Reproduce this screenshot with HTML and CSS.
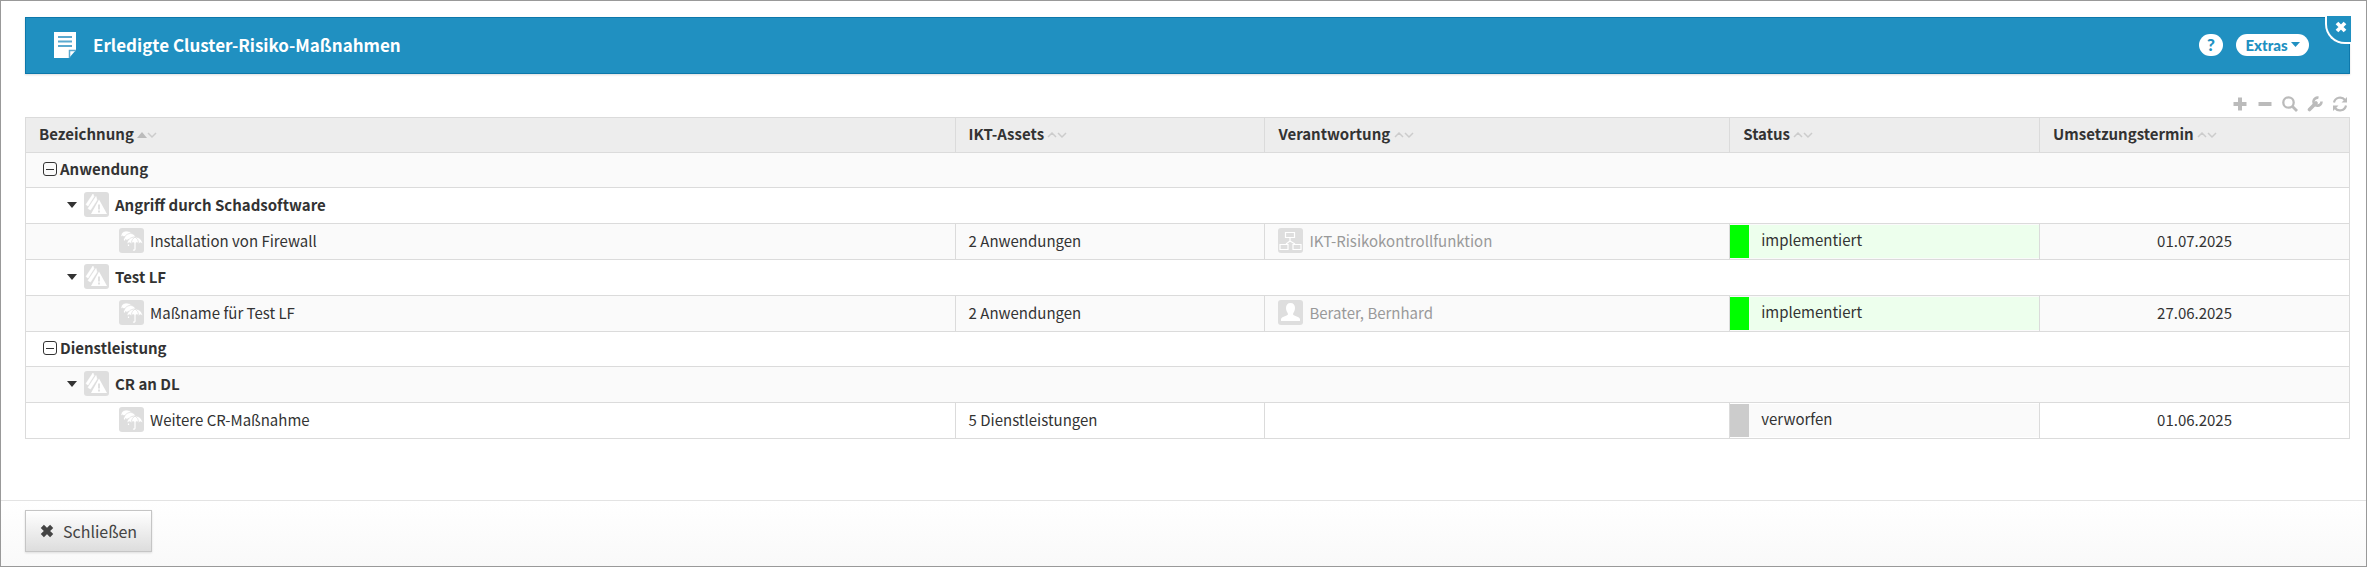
FILE: index.html
```html
<!DOCTYPE html>
<html lang="de">
  <head>
    <meta charset="utf-8">
    <title>Erledigte Cluster-Risiko-Maßnahmen</title>
    <link rel="stylesheet" href="styles.css">
  </head>

  <body>
    <svg class="defs" aria-hidden="true">
		<symbol id="i-risk" viewBox="0 0 25 25">
			<rect width="25" height="25" rx="3" fill="#dedede"/>
			<path d="M9 2L10 4.500L4 14L2 12.500ZM12 4.500L13 8L6.500 18L4 16.500Z" fill="#fff" stroke="#fff" stroke-width=".6"/>
			<path d="M15 7.500L23 22H7Z" fill="#fff"/>
			<path d="M15 12.500v5M15 18.500v2" stroke="#dedede" stroke-width="1.800"/>
		</symbol>
		<symbol id="i-umbrella" viewBox="0 0 25 25">
			<rect width="25" height="25" rx="3" fill="#dedede"/>
			<g fill="#fff" stroke="#dedede" stroke-width=".8">
				<path d="M2 9C1.500 5.500 4.500 2.500 8 3C11 3.300 13.500 5 13.500 8Q12 7 11 9Q9.500 7 8 9Q6.500 7 5 9Q3.500 7 2 9Z"/>
				<path d="M5 12.500C5 8.500 7.500 5.500 11.500 5.500C15 5.500 17 8 17 11.500Q16 10.500 14.500 12Q13 10 11 12Q9.500 10.500 8 12.500Q6.500 10.500 5 12.500Z"/>
				<path d="M8 16C8 12 11.500 9 16 9C20.500 9 23.500 12 23.500 16Q21.500 13.500 19.700 15.700Q18 13.500 16 15.700Q14 13.500 12.200 15.700Q10.500 13.500 8 16Z"/>
				<path d="M16 9Q12.500 11 12.200 15M16 9Q19.500 11 19.700 15" fill="none"/>
			</g>
			<path d="M16 15v6q0 1.500-2 1M9.500 16.500v1.500M5.500 10.500v2" stroke="#fff" stroke-width="1.200" fill="none"/>
		</symbol>
		<symbol id="i-org" viewBox="0 0 25 25">
			<rect width="25" height="25" rx="3" fill="#dedede"/>
			<path d="M7.500 4.500h9v5h-9ZM2 16.500h8v5h-8ZM15 16.500h8v5h-8ZM12 10v3M12 13L8 16M12 13l5 3" fill="none" stroke="#fff" stroke-width="1.200"/>
		</symbol>
		<symbol id="i-user" viewBox="0 0 25 25">
			<rect width="25" height="25" rx="3" fill="#dedede"/>
			<path d="M12.500 3C15.500 3 17 5 17 8C17 11 15.500 12 15 14C15 16 21 16 22 19V21H3V19C4 16 10 16 10 14C9.500 12 8 11 8 8C8 5 9.500 3 12.500 3Z" fill="#fff"/>
		</symbol>
		<symbol id="i-sort" viewBox="0 0 20 8">
			<path d="M1 6L5 2L9 6M11 2L15 6L19 2" fill="none" stroke="#ccc" stroke-width="1.500"/>
		</symbol>
		<symbol id="i-times" viewBox="0 0 12 12">
			<path d="M2 2L10 10M10 2L2 10" stroke="currentColor" stroke-width="3.800"/>
		</symbol>
	</svg>

    <div class="dialog">
		<div class="content">
			<header class="title-bar">
				<svg class="title-icon" viewBox="0 0 22 26"><path d="M0 0H22V18L15 26H0Z" fill="#fff"/><path d="M4 5H18M4 9.500H18M4 14H18" stroke="#5ba9cf" stroke-width="2"/><path d="M15.500 26V18.500H22" fill="none" stroke="#5ba9cf" stroke-width="1.500"/></svg>
				<h1>Erledigte Cluster-Risiko-Maßnahmen</h1>
				<button class="help" aria-label="Hilfe">?</button>
				<button class="extras">Extras <svg viewBox="0 0 9 5"><path d="M0 0H9L4.500 5Z" fill="currentColor"/></svg></button>
				<button class="close" aria-label="Fenster schließen"><svg><use href="#i-times"/></svg></button>
			</header>

			<div class="tools">
				<button aria-label="Alle öffnen"><svg viewBox="0 0 16 16"><path d="M8 1.500V14.500M1.500 8H14.500" stroke-width="4"/></svg></button>
				<button aria-label="Alle schließen"><svg viewBox="0 0 16 16"><path d="M1.500 8H14.500" stroke-width="4"/></svg></button>
				<button aria-label="Suchen"><svg viewBox="0 0 16 16"><circle cx="6.500" cy="6.500" r="5.200" stroke-width="2.300"/><path d="M10.500 10.500L15 15" stroke-width="2.800"/></svg></button>
				<button aria-label="Einstellungen"><svg viewBox="0 0 16 16"><path d="M2.500 13.500L9 7" stroke-width="3.600" stroke-linecap="round"/><path d="M14.500 5.500A4 4 0 1 1 11.500 1.800" stroke-width="2.600"/></svg></button>
				<button aria-label="Aktualisieren"><svg viewBox="0 0 16 16"><path d="M2 6.500A6.200 6.200 0 0 1 13 4M14 9.500A6.200 6.200 0 0 1 3 12" stroke-width="2.200"/><path d="M15 1V6.500H9.500ZM1 15V9.500H6.500Z" class="solid"/></svg></button>
			</div>

			<table>
				<colgroup>
					<col class="col-name"><col class="col-assets"><col class="col-resp"><col class="col-status"><col class="col-date">
				</colgroup>
				<thead>
					<tr>
						<th>Bezeichnung <svg class="sort" viewBox="0 0 20 8"><path d="M0 7L5 1L10 7Z" fill="#bbb"/><path d="M11 2L15 6L19 2" fill="none" stroke="#ccc" stroke-width="1.500"/></svg></th>
						<th>IKT-Assets <svg class="sort"><use href="#i-sort"/></svg></th>
						<th>Verantwortung <svg class="sort"><use href="#i-sort"/></svg></th>
						<th>Status <svg class="sort"><use href="#i-sort"/></svg></th>
						<th>Umsetzungstermin <svg class="sort"><use href="#i-sort"/></svg></th>
					</tr>
				</thead>
				<tbody>
					<tr class="group">
						<td colspan="5"><div class="cell"><button class="toggle" aria-label="Anwendung zuklappen"></button>Anwendung</div></td>
					</tr>
					<tr class="risk">
						<td colspan="5"><div class="cell"><button class="caret" aria-label="Zuklappen"></button><svg class="icon"><use href="#i-risk"/></svg>Angriff durch Schadsoftware</div></td>
					</tr>
					<tr>
						<td><div class="cell measure"><svg class="icon"><use href="#i-umbrella"/></svg>Installation von Firewall</div></td>
						<td>2 Anwendungen</td>
						<td><div class="cell person"><svg class="icon"><use href="#i-org"/></svg>IKT-Risikokontrollfunktion</div></td>
						<td class="status"><div class="done">implementiert</div></td>
						<td class="date">01.07.2025</td>
					</tr>
					<tr class="risk">
						<td colspan="5"><div class="cell"><button class="caret" aria-label="Zuklappen"></button><svg class="icon"><use href="#i-risk"/></svg>Test LF</div></td>
					</tr>
					<tr>
						<td><div class="cell measure"><svg class="icon"><use href="#i-umbrella"/></svg>Maßname für Test LF</div></td>
						<td>2 Anwendungen</td>
						<td><div class="cell person"><svg class="icon"><use href="#i-user"/></svg>Berater, Bernhard</div></td>
						<td class="status"><div class="done">implementiert</div></td>
						<td class="date">27.06.2025</td>
					</tr>
					<tr class="group">
						<td colspan="5"><div class="cell"><button class="toggle" aria-label="Dienstleistung zuklappen"></button>Dienstleistung</div></td>
					</tr>
					<tr class="risk">
						<td colspan="5"><div class="cell"><button class="caret" aria-label="Zuklappen"></button><svg class="icon"><use href="#i-risk"/></svg>CR an DL</div></td>
					</tr>
					<tr>
						<td><div class="cell measure"><svg class="icon"><use href="#i-umbrella"/></svg>Weitere CR-Maßnahme</div></td>
						<td>5 Dienstleistungen</td>
						<td></td>
						<td class="status"><div class="dropped">verworfen</div></td>
						<td class="date">01.06.2025</td>
					</tr>
				</tbody>
			</table>
		</div>

		<footer>
			<button class="btn"><svg><use href="#i-times"/></svg>Schließen</button>
		</footer>
	</div>
  </body>
</html>
```

FILE: styles.css
```css
* {
	box-sizing: border-box;
}

body {
	margin: 0;
	font-family: "Noto Sans CJK SC", "Noto Sans", sans-serif;
	font-size: 15px;
	line-height: 20px;
	color: #333;
}

button {
	margin: 0;
	padding: 0;
	border: none;
	background: none;
	font: inherit;
	color: inherit;
	cursor: pointer;
}

svg {
	display: block;
}

.defs {
	position: absolute;
	width: 0;
	height: 0;
}

.dialog {
	display: flex;
	flex-direction: column;
	min-height: 100vh;
	border: 1px solid #999;
	background: #fff;
}

.content {
	flex: 1;
	padding: 16px 16px 0 24px;
}

.title-bar {
	position: relative;
	display: flex;
	align-items: center;
	height: 57px;
	padding: 0 40px 2px 28px;
	border: 1px solid #0d78ab;
	background: #2090c1;
	box-shadow: 0 1px 2px #ddd;
	color: #fff;
}

.title-icon {
	width: 22px;
	height: 26px;
	margin-right: 17px;
}

h1 {
	flex: 1;
	margin: 0;
	font-size: 17px;
	font-weight: bold;
}

.help,
.extras {
	border-radius: 12px;
	background: #fff;
	color: #2090c1;
	font-family: Lato, sans-serif;
	font-size: 15px;
	font-weight: 900;
}

.help {
	width: 24px;
	height: 22px;
	margin-right: 13px;
	font-size: 17px;
}

.extras {
	display: flex;
	align-items: center;
	justify-content: center;
	gap: 3px;
	width: 73px;
	height: 22px;
}

.extras svg {
	width: 9px;
	height: 5px;
}

.close {
	position: absolute;
	top: -2px;
	right: -2px;
	width: 26px;
	height: 28px;
	border: 2px solid #fff;
	border-width: 0 0 2px 2px;
	border-bottom-left-radius: 20px;
	background: #2090c1;
}

.close svg {
	width: 12px;
	height: 12px;
	margin: -4px 0 0 8px;
}

.tools {
	display: flex;
	justify-content: flex-end;
	align-items: flex-end;
	gap: 9px;
	height: 43px;
	padding: 0 2px 5px 0;
}

.tools svg {
	width: 16px;
	height: 16px;
	fill: none;
	stroke: #bbb;
}

.tools .solid {
	fill: #bbb;
	stroke: none;
}

table {
	width: 100%;
	table-layout: fixed;
	border-collapse: collapse;
	border: 1px solid #dbdbdb;
}

.col-name {
	width: 40%;
}

.col-assets,
.col-status {
	width: 13.333%;
}

.col-resp {
	width: 20%;
}

th,
td {
	height: 36px;
	padding: 0 13px 2px;
	border: 1px solid #dbdbdb;
	text-align: left;
}

th,
.group td {
	height: 35px;
}

th {
	background: #ededed;
}

tbody tr:nth-child(odd) {
	background: #fafafa;
}

.sort {
	display: inline-block;
	width: 20px;
	height: 8px;
	vertical-align: 1px;
}

.cell {
	display: flex;
	align-items: center;
}

.icon {
	width: 25px;
	height: 25px;
	margin-right: 6px;
}

.group,
.risk {
	font-weight: bold;
}

.toggle {
	width: 14px;
	height: 14px;
	margin: 0 3px 0 4px;
	border: 1px solid #333;
	border-radius: 3px;
	background: linear-gradient(#333, #333) center / 8px 1px no-repeat;
}

.caret {
	margin: 0 7px 0 28px;
	border: 5px solid transparent;
	border-top: 6px solid #333;
	border-bottom: none;
}

.measure {
	padding-left: 80px;
}

.person {
	color: #999;
}

.status {
	padding: 0;
}

.status div {
	padding: 5px 12px 8px;
	border-left: 19px solid #ccc;
	background: #fafafa;
}

.status .done {
	border-color: #0f0;
	background: #edffed;
}

.date {
	text-align: center;
}

footer {
	height: 66px;
	padding: 9px 24px;
	border-top: 1px solid #e3e3e3;
	background: linear-gradient(#fff, #f9f9f9);
}

.btn {
	display: flex;
	align-items: center;
	gap: 9px;
	height: 42px;
	padding: 0 14px;
	border: 1px solid #c5c5c5;
	background: linear-gradient(#fff, #ddd);
	box-shadow: 0 1px 2px #ddd;
	font-size: 16px;
	color: #444;
}

.btn svg {
	width: 14px;
	height: 14px;
}
```
